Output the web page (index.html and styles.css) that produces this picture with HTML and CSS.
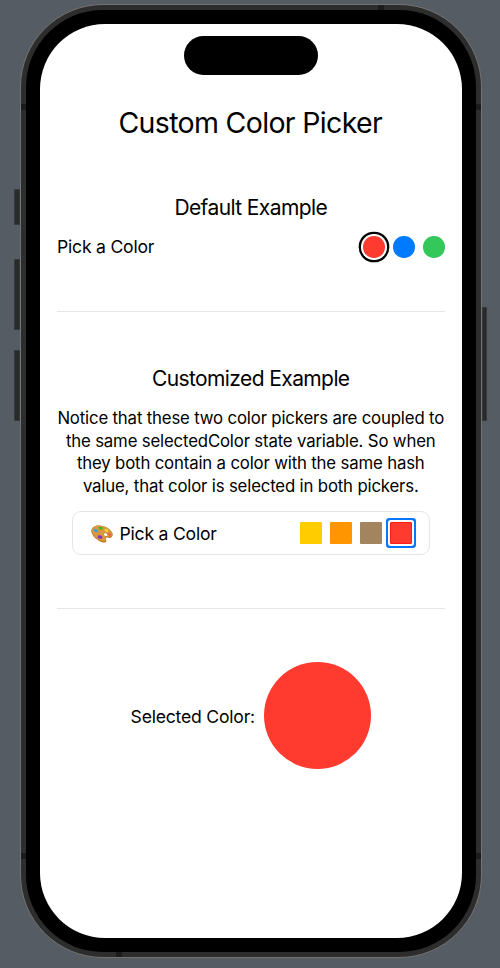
FILE: index.html
```html
<!DOCTYPE html>
<html lang="en">
<head>
<meta charset="utf-8">
<title>Custom Color Picker</title>
<link rel="stylesheet" href="styles.css">
</head>
<body>
<div class="phone">
  <i class="key action"></i><i class="key up"></i><i class="key down"></i><i class="key power"></i>
  <div class="frame">
    <i class="seam tl"></i><i class="seam tr"></i><i class="seam bl"></i><i class="seam br"></i><i class="seam top"></i><i class="seam bottom"></i>
    <div class="bezel">
      <main class="screen">
        <div class="island"></div>
        <h1>Custom Color Picker</h1>
        <section class="default">
          <h2>Default Example</h2>
          <div class="picker">
            <span class="label">Pick a Color</span>
            <div class="dots">
              <span class="dot red selected"></span>
              <span class="dot blue"></span>
              <span class="dot green"></span>
            </div>
          </div>
        </section>
        <hr>
        <section class="customized">
          <h2>Customized Example</h2>
          <p>Notice that these two color pickers are coupled to<br>the same selectedColor state variable. So when<br>they both contain a color with the same hash<br>value, that color is selected in both pickers.</p>
          <div class="card">
            <svg class="palette" viewBox="0 0 22 18" width="22" height="18">
              <path d="M.3 6C.2 2.800 3.800.4 8 .5c5.800.1 11.800 3.500 13.500 7.700.7 2-.2 4.200-2.100 4.700-1.700.4-2.900-.9-4.200-.4-1.600.6.6 2.500.2 3.800-.6 1.500-2.800 1.500-4.800.7C5.400 15.100.5 10.400.3 6z" fill="#b97426"/>
              <path d="M.6 5.500C.8 2.600 4.200.4 8 .6c5.600.2 11.400 3.500 13 7.300.6 1.900-.2 3.500-1.900 3.900-1.600.3-2.700-.8-4.200-.2-1.800.8.3 2.500-.2 3.800-.6 1.200-2.400 1.200-4.300.4C5.600 13.800.4 9.600.6 5.500z" fill="#d9983f"/>
              <ellipse cx="14.600" cy="9.700" rx="1.700" ry="1.200" transform="rotate(25 14.600 9.700)" fill="#fff"/>
              <ellipse cx="4.700" cy="5.500" rx="2.400" ry="1.500" transform="rotate(25 4.700 5.500)" fill="#3aa5cf"/>
              <ellipse cx="9.700" cy="3.200" rx="2.300" ry="1.500" transform="rotate(10 9.700 3.200)" fill="#4fb324"/>
              <ellipse cx="15.500" cy="5.400" rx="2.100" ry="1.400" transform="rotate(25 15.500 5.400)" fill="#f3d62f"/>
              <ellipse cx="18.700" cy="9.500" rx="2" ry="1.300" transform="rotate(35 18.700 9.500)" fill="#e8673f"/>
              <ellipse cx="9" cy="12" rx="2.500" ry="1.700" transform="rotate(15 9 12)" fill="#7c36bd"/>
            </svg>
            <span class="label">Pick a Color</span>
            <div class="squares">
              <span class="square yellow"></span>
              <span class="square orange"></span>
              <span class="square brown"></span>
              <span class="square red selected"></span>
            </div>
          </div>
        </section>
        <hr class="second">
        <div class="result">
          <span class="result-label">Selected Color:</span>
          <span class="swatch"></span>
        </div>
      </main>
    </div>
  </div>
</div>
</body>
</html>
```
FILE: styles.css
```css
* { box-sizing: border-box; }
body {
  margin: 0;
  height: 968px;
  overflow: hidden;
  background: #565c64;
  font-family: Inter, sans-serif;
  color: #000;
}
.phone { position: relative; padding: 4px 18px 10px 20px; height: 968px; }
.frame {
  position: relative;
  height: 954px;
  padding: 5px;
  border: 1px solid #73736f;
  border-radius: 83px;
  background: #2d2d2d;
}
.bezel { height: 100%; padding: 14px; border-radius: 77px; background: #000; }
.screen {
  position: relative;
  height: 914px;
  padding: 81px 17.500px 0 17px;
  border-radius: 65px;
  background: #fff;
  display: flex;
  flex-direction: column;
}
.island {
  position: absolute;
  top: 12px;
  left: 144px;
  width: 134px;
  height: 39px;
  border-radius: 20px;
  background: #000;
}
.key { position: absolute; background: #292a2b; border: 1px solid #383b3d; }
.action { left: 14px; top: 189px; width: 6px; height: 36px; }
.up { left: 14px; top: 259px; width: 6px; height: 71px; }
.down { left: 14px; top: 350px; width: 6px; height: 71px; }
.power { right: 13px; top: 307px; width: 5px; height: 114px; }
.seam { position: absolute; background: #1b1b1b; }
.tl, .tr, .bl, .br { width: 5px; height: 6px; }
.tl, .bl { left: 0; }
.tr, .br { right: 0; }
.tl, .tr { top: 99px; }
.bl, .br { bottom: 98px; }
.top, .bottom { width: 6px; height: 5px; }
.top { top: 0; left: 357px; }
.bottom { bottom: 0; left: 95px; }
h1, h2, p { margin: 0; font-weight: 400; text-align: center; white-space: nowrap; }
h1 { font-size: 28.500px; line-height: 36px; letter-spacing: -.66px; margin-left: -1px; }
h2 { font-size: 21px; line-height: 24px; padding-top: 2px; letter-spacing: -.6px; }
.default { margin-top: 53px; }
.picker { display: flex; align-items: center; justify-content: space-between; height: 30px; margin-top: 12px; }
.label, .result-label { font-size: 17.600px; letter-spacing: -.22px; white-space: nowrap; }
.picker .label { margin-bottom: 1px; }
.card .label { margin-top: 1px; }
.result-label { margin-top: 2px; }
.dots { display: flex; gap: 8.500px; }
.dot { width: 21.500px; height: 21.500px; border-radius: 50%; }
.red { background: #ff3b30; }
.blue { background: #007aff; }
.green { background: #34c759; }
.dot.selected { box-shadow: 0 0 0 2px #fff, 0 0 0 4.300px #000; }
hr { width: 100%; height: 1px; margin: 49px 0 0; border: 0; background: #e6e6e6; }
.customized { margin-top: 53px; }
p { margin-top: 16px; font-size: 16.800px; line-height: 22.500px; letter-spacing: -.17px; }
.card {
  display: flex;
  align-items: center;
  height: 44px;
  margin: 14px 15px 0;
  padding: 0 17px 0 18px;
  border: 1px solid #e5e5e7;
  border-radius: 9px;
}
.palette { margin: 2px 6.500px 0 0; }
.squares { display: flex; gap: 8px; margin-left: auto; margin-right: -.5px; }
.square { width: 22px; height: 22px; border-radius: 1px; }
.yellow { background: #ffcc00; }
.orange { background: #ff9500; }
.brown { background: #a2845e; }
.square.selected { border: 1px solid #ff1d16; box-shadow: 0 0 0 2px #fff, 0 0 0 4px #0876ff; }
.second { margin-top: 53px; }
.result { display: flex; align-items: center; justify-content: center; gap: 9px; margin-top: 53px; }
.swatch { width: 107px; height: 107px; border-radius: 50%; background: #ff3b30; }
```
